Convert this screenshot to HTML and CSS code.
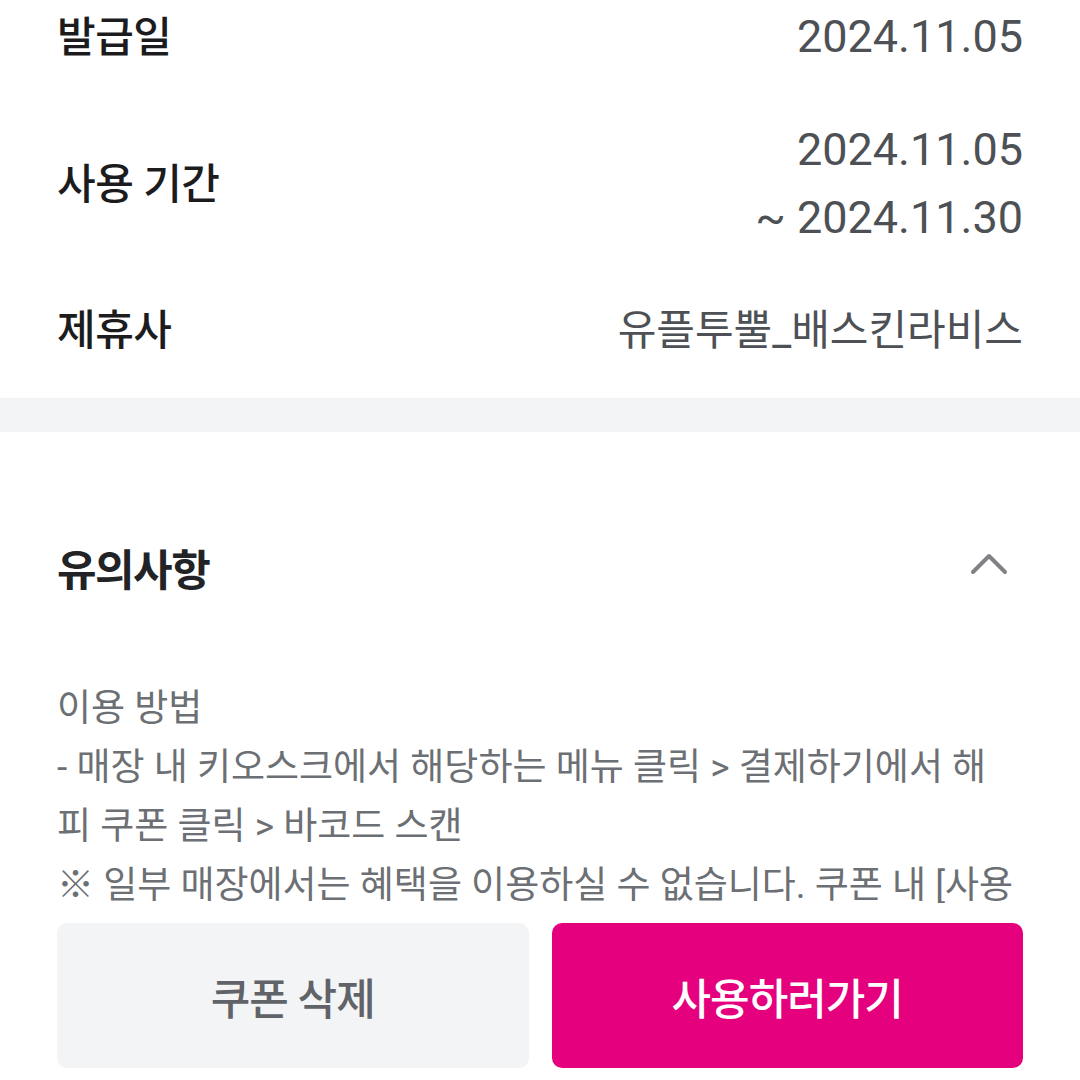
FILE: index.html
```html
<!DOCTYPE html>
<html lang="ko">
<head>
<meta charset="utf-8">
<link rel="stylesheet" href="styles.css">
</head>
<body>
<section class="info">
  <div class="row">
    <div class="label">발급일</div>
    <div class="value"><span class="num">2024.11.05</span></div>
  </div>
  <div class="row">
    <div class="label">사용 기간</div>
    <div class="value"><span class="num">2024.11.05</span><br><span class="num">~ 2024.11.30</span></div>
  </div>
  <div class="row">
    <div class="label">제휴사</div>
    <div class="value">유플투뿔_배스킨라비스</div>
  </div>
</section>
<div class="band"></div>
<section class="notice">
  <div class="notice-head">
    <h2 class="notice-title">유의사항</h2>
    <svg class="chev" width="38" height="24" viewBox="0 0 38 24"><path d="M3 20 L19 4 L35 20" fill="none" stroke="#808285" stroke-width="4" stroke-linecap="round" stroke-linejoin="round"/></svg>
  </div>
  <div class="notice-body">
    <p>이용 방법</p>
    <p>- 매장 내 키오스크에서 해당하는 메뉴 클릭 &gt; 결제하기에서 해피 쿠폰 클릭 &gt; 바코드 스캔</p>
    <p>※ 일부 매장에서는 혜택을 이용하실 수 없습니다. 쿠폰 내 [사용처] 정보를 확인해 주세요.</p>
  </div>
</section>
<div class="bottom-bar">
  <button class="btn btn-gray">쿠폰 삭제</button>
  <button class="btn btn-pink">사용하러가기</button>
</div>
</body>
</html>
```
FILE: styles.css
```css
html, body {
  margin: 0;
  padding: 0;
  background: #ffffff;
  height: 1080px;
  overflow: hidden;
}
body {
  font-family: Roboto, "Noto Sans CJK KR", sans-serif;
}
.info {
  padding: 3px 57px 34px;
  display: flex;
  flex-direction: column;
  gap: 45px;
}
.row {
  display: flex;
  justify-content: space-between;
  align-items: center;
}
.label {
  font-size: 42px;
  font-weight: 500;
  color: #1c1c1e;
  line-height: 67px;
  letter-spacing: -0.5px;
}
.value {
  font-size: 42px;
  font-weight: 400;
  color: #4d5054;
  line-height: 67px;
  text-align: right;
}
.num {
  font-size: 45px;
}
.band {
  height: 34px;
  background: #f2f4f6;
}
.notice {
  padding: 100px 57px 0;
}
.notice-head {
  display: flex;
  justify-content: space-between;
  align-items: center;
  height: 70px;
}
.notice-title {
  margin: 0;
  font-size: 43px;
  font-weight: 700;
  color: #222326;
  letter-spacing: -1.5px;
}
.chev {
  margin-right: 15px;
  margin-bottom: 7px;
}
.notice-body {
  width: 958px;
  color: #6c6f73;
  font-size: 37px;
  line-height: 59px;
  margin-top: 77px;
}
.notice-body p {
  margin: 0;
}
.bottom-bar {
  position: fixed;
  left: 0;
  right: 0;
  bottom: 0;
  background: #ffffff;
  display: flex;
  gap: 23px;
  padding: 20px 57px 12px;
}
.btn {
  flex: 1;
  height: 145px;
  border: none;
  border-radius: 10px;
  font-family: Roboto, "Noto Sans CJK KR", sans-serif;
  font-size: 43px;
  font-weight: 500;
  letter-spacing: -1px;
}
.btn-gray {
  background: #f2f4f6;
  color: #606367;
}
.btn-pink {
  background: #e5007e;
  color: #ffffff;
}
```
